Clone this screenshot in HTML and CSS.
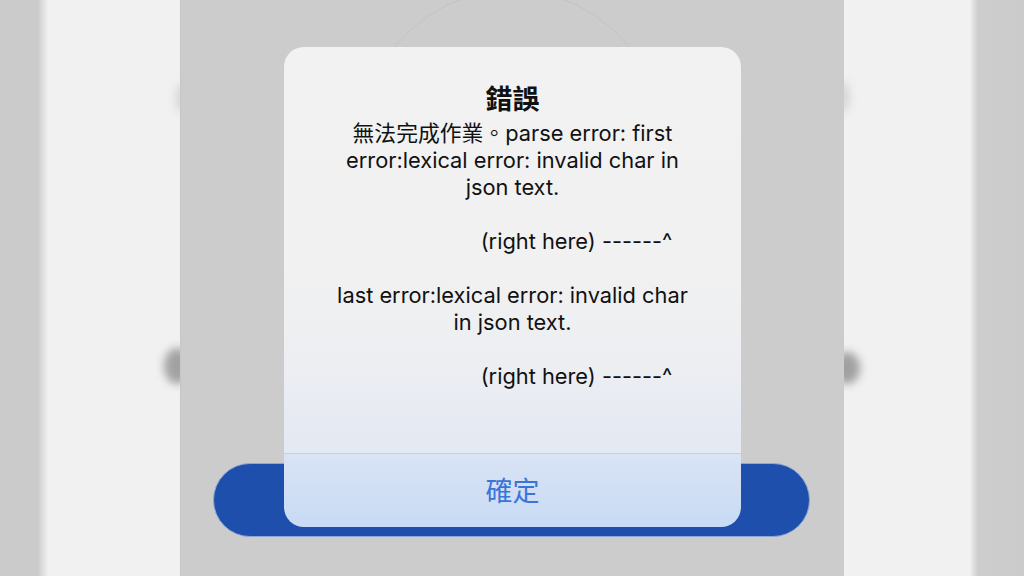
FILE: index.html
```html
<!DOCTYPE html>
<html lang="zh-Hant">
<head>
<meta charset="utf-8">
<title>錯誤</title>
<link rel="stylesheet" href="styles.css">
</head>
<body>
<div class="screen">
  <div class="edge edge-left"></div>
  <div class="side side-left">
    <span class="blob blob-left-top"></span>
    <span class="blob blob-left"></span>
  </div>
  <div class="center">
    <div class="ring"></div>
    <div class="pill"></div>
    <div class="alert">
      <div class="alert-content">
        <h1 class="alert-title">錯誤</h1>
        <p class="alert-message">無法完成作業。parse error: first<br>error:lexical error: invalid char in<br>json text.<br>&nbsp;<br><span class="indent">(right here) ------^</span><br>&nbsp;<br>last error:lexical error: invalid char<br>in json text.<br>&nbsp;<br><span class="indent">(right here) ------^</span></p>
      </div>
      <div class="alert-action">確定</div>
    </div>
  </div>
  <div class="side side-right">
    <span class="blob blob-right-top"></span>
    <span class="blob blob-right"></span>
  </div>
  <div class="edge edge-right"></div>
</div>
</body>
</html>
```
FILE: styles.css
```css
html, body {
  margin: 0;
  padding: 0;
  width: 1024px;
  height: 576px;
  overflow: hidden;
  background: #cccccc;
}

.screen {
  display: flex;
  width: 1024px;
  height: 576px;
}

.edge-left {
  width: 48px;
  background: linear-gradient(to right, #cbcbcb 0, #cbcbcb 38px, #dedede 43px, #f0f0f0 48px);
}

.edge-right {
  width: 54px;
  background: linear-gradient(to right, #f0f0f0 0, #e2e2e2 3px, #cdcdcd 8px, #cbcbcb 54px);
}

.side {
  position: relative;
  background: #f1f1f1;
  overflow: hidden;
}

.side-left {
  width: 132px;
}

.side-right {
  width: 126px;
}

.blob {
  position: absolute;
  border-radius: 50%;
  filter: blur(4px);
}

.blob-left {
  left: 116px;
  top: 348px;
  width: 26px;
  height: 36px;
  background: #a2a2a2;
}

.blob-left-top {
  left: 128px;
  top: 84px;
  width: 10px;
  height: 28px;
  background: #d4d4d4;
}

.blob-right {
  left: -10px;
  top: 352px;
  width: 26px;
  height: 32px;
  background: #a0a0a0;
}

.blob-right-top {
  left: -5px;
  top: 82px;
  width: 10px;
  height: 30px;
  background: #d2d2d2;
}

.center {
  position: relative;
  width: 664px;
  display: grid;
  background: #cccccc;
  border-left: 1px solid #c6c6c6;
  box-sizing: border-box;
  overflow: hidden;
}

.ring {
  position: absolute;
  left: 181px;
  top: -10px;
  width: 300px;
  height: 300px;
  border-radius: 50%;
  border: 1px solid #c3c3c3;
  box-sizing: border-box;
}

.pill {
  grid-area: 1 / 1;
  align-self: start;
  justify-self: start;
  margin-top: 463px;
  margin-left: 32px;
  width: 597px;
  height: 74px;
  box-sizing: border-box;
  border-radius: 37px;
  background: #1f4fad;
  border: 1px solid #8ea6d6;
}

.alert {
  position: relative;
  grid-area: 1 / 1;
  align-self: start;
  justify-self: start;
  margin-top: 47px;
  margin-left: 103px;
  width: 457px;
  height: 480px;
  border-radius: 20px;
  overflow: hidden;
  display: flex;
  flex-direction: column;
  font-family: "Inter", "Noto Sans CJK TC", sans-serif;
  color: #111111;
  text-align: center;
}

.alert-content {
  flex: 1;
  padding-top: 33px;
  background: linear-gradient(to bottom, #f2f2f2 0%, #f1f1f1 55%, #eceef2 80%, #e3e8f2 100%);
}

.alert-title {
  margin: 0 0 4px;
  font-family: "Noto Sans CJK TC", sans-serif;
  font-size: 27px;
  font-weight: 700;
  line-height: 36px;
}

.alert-message {
  margin: 0;
  font-size: 21.8px;
  line-height: 27px;
  white-space: nowrap;
}

.indent {
  padding-left: 128px;
}

.alert-action {
  height: 74px;
  border-top: 1.5px solid #c3d0e4;
  background: linear-gradient(to bottom, #d9e4f4 0%, #c8daf5 100%);
  display: flex;
  align-items: center;
  justify-content: center;
  font-family: "Noto Sans CJK TC", sans-serif;
  font-size: 27px;
  color: #3a74d9;
  padding-bottom: 2px;
  box-sizing: border-box;
}
```
